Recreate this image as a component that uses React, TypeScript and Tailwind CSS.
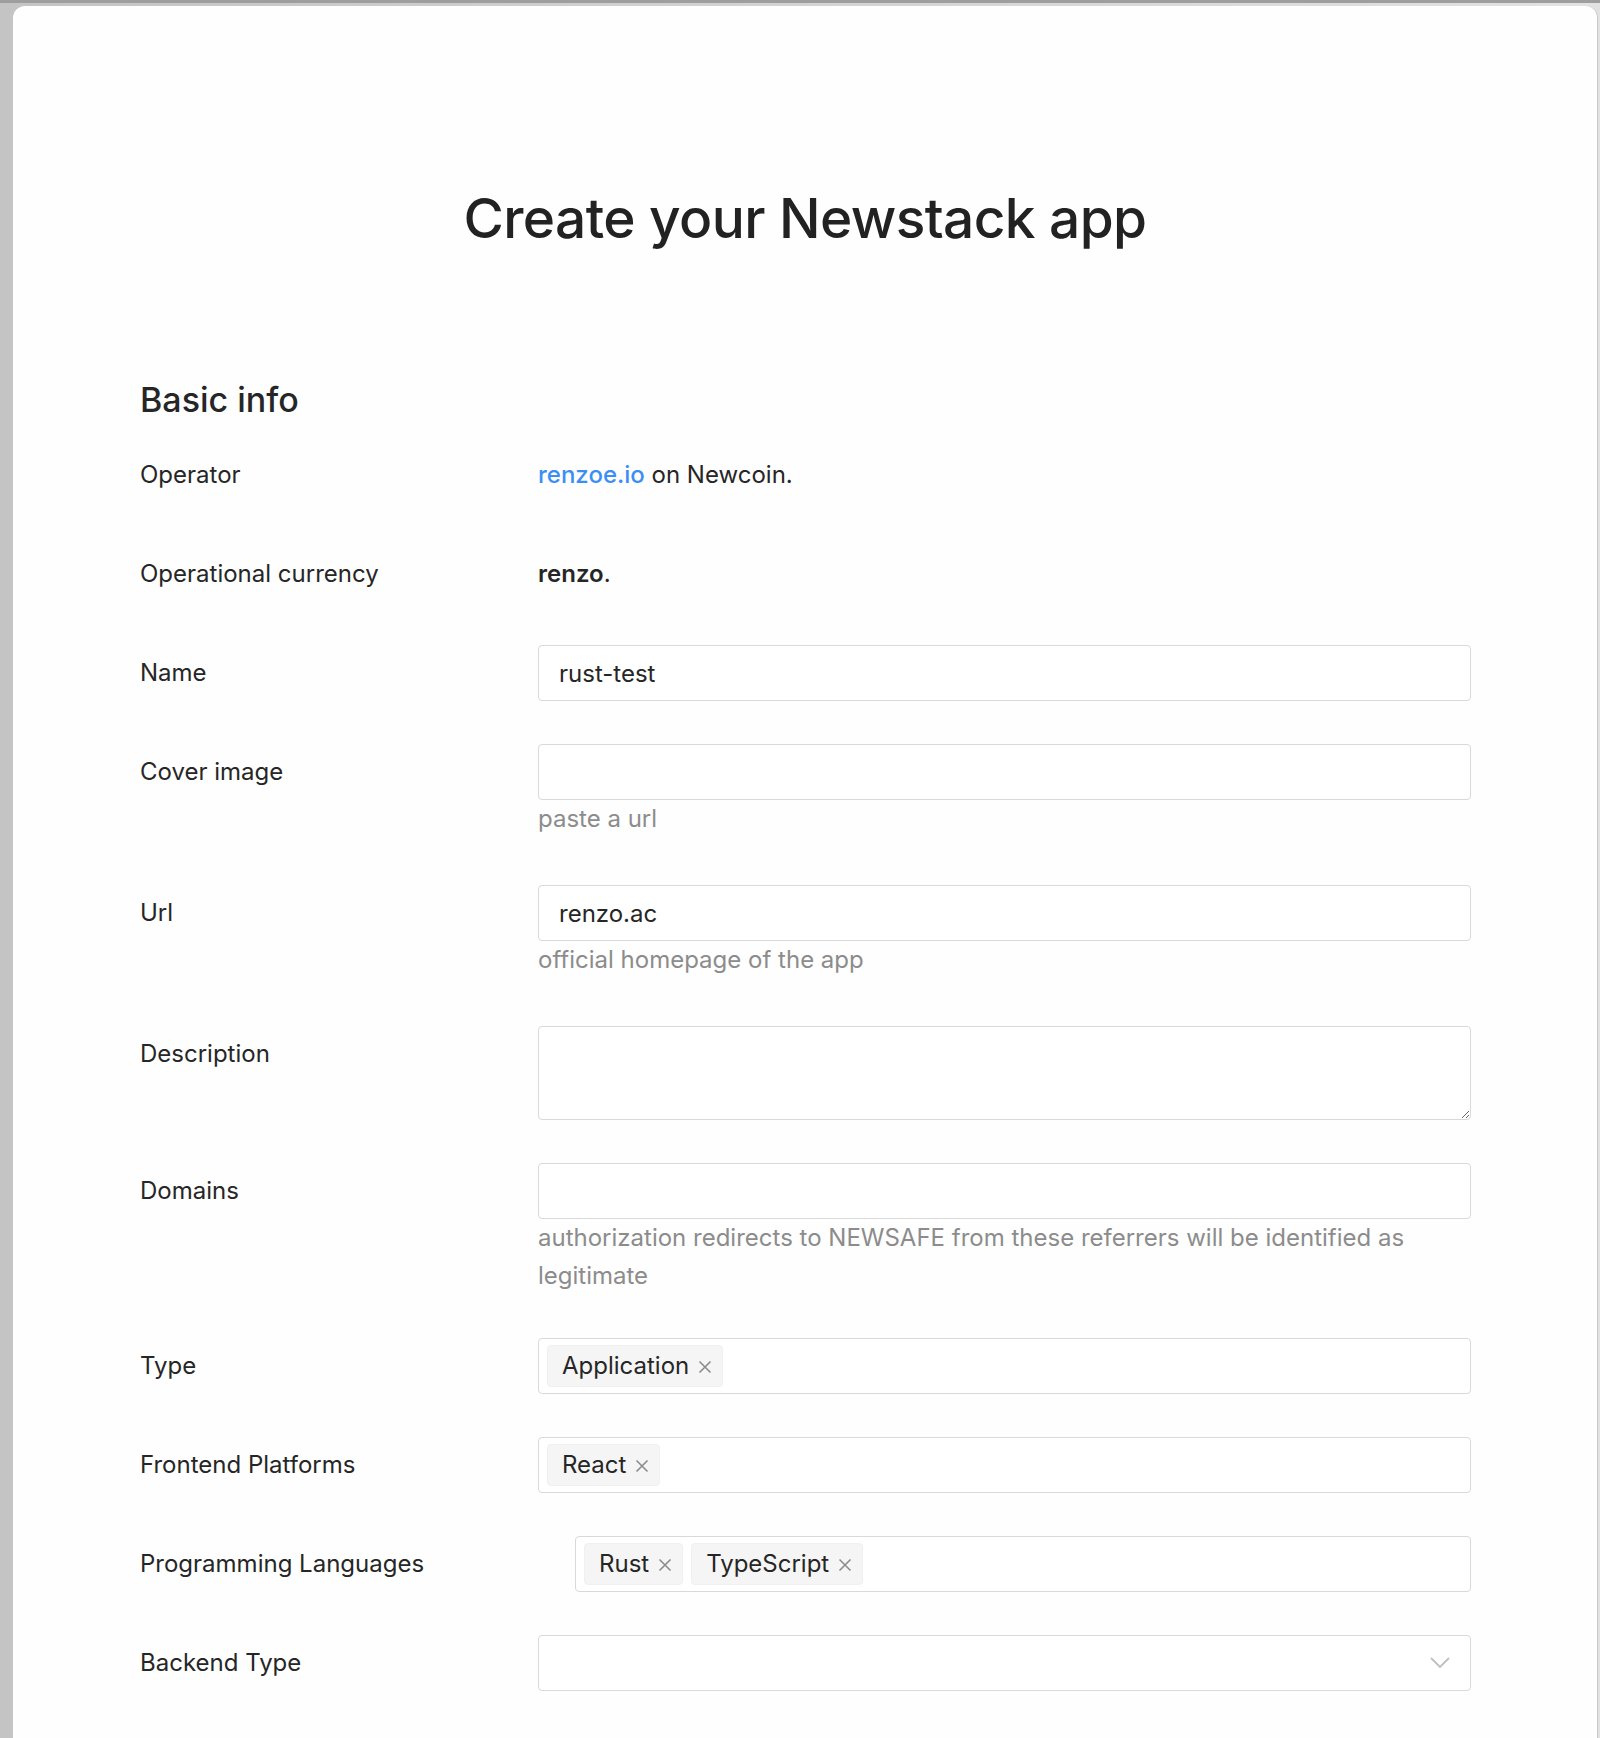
import type { ReactNode } from 'react'

const FONT = { fontFamily: 'Inter, "Noto Sans", "Liberation Sans", sans-serif' }

function Row({
  label,
  children,
}: {
  label: string
  children: ReactNode
}) {
  return (
    <div className="flex mb-[43px]">
      <div className="w-[398px] shrink-0 h-[56px] flex items-center text-[24px] text-[#262626]">
        {label}
      </div>
      <div className="w-[933px] flex flex-col">{children}</div>
    </div>
  )
}

function Extra({ children }: { children: ReactNode }) {
  return <div className="min-h-[42px] text-[24px] leading-[38px] text-[#8c8c8c]">{children}</div>
}

function TextInput({ value = '' }: { value?: string }) {
  return (
    <input
      readOnly
      value={value}
      className="h-[56px] w-full rounded-[4px] border border-[#d9d9d9] bg-white px-[20px] text-[24px] text-[#262626] outline-none"
      style={FONT}
    />
  )
}

function Tag({ label }: { label: string }) {
  return (
    <span className="flex h-[42px] items-center gap-[9px] rounded-[4px] border border-[#f0f0f0] bg-[#f5f5f5] pl-[14px] pr-[10px] text-[24px] text-[#262626]">
      {label}
      <svg width="14" height="14" viewBox="0 0 14 14" className="mt-[2px]">
        <path d="M1.5 1.5 L12.5 12.5 M12.5 1.5 L1.5 12.5" stroke="#8c8c8c" strokeWidth="1.6" />
      </svg>
    </span>
  )
}

function TagSelect({ tags, className = '' }: { tags: string[]; className?: string }) {
  return (
    <div
      className={`h-[56px] rounded-[4px] border border-[#d9d9d9] bg-white pl-[8px] flex items-center gap-[8px] ${className}`}
    >
      {tags.map((t) => (
        <Tag key={t} label={t} />
      ))}
    </div>
  )
}

export default function App() {
  return (
    <div
      className="w-[1600px] h-[1738px] overflow-hidden bg-gradient-to-r from-[#c4c4c4] to-[#e2e2e2] border-t-[3px] border-[#9e9e9e] flex pt-[3px] pl-[13px] pr-[2px]"
      style={FONT}
    >
      <div className="flex-1 bg-[#fefefe] rounded-t-[12px] border-r border-[#c8c8c8] flex flex-col">
        {/* Title */}
        <h1 className="mt-[178px] text-center text-[55px] leading-[68px] font-medium text-[#222] tracking-[-0.6px]">
          Create your Newstack app
        </h1>

        <div className="pl-[127px]">
          <h2 className="mt-[128px] text-[34px] leading-[40px] font-medium text-[#262626]">Basic info</h2>

          <div className="mt-[27px]">
            <Row label="Operator">
              <div className="h-[56px] flex items-center text-[24px] text-[#262626]">
                <span className="font-medium text-[#3b8ef6]">renzoe.io</span>
                <span>&nbsp;on Newcoin.</span>
              </div>
            </Row>

            <Row label="Operational currency">
              <div className="h-[56px] flex items-center text-[24px] text-[#262626]">
                <span className="font-semibold">renzo</span>.
              </div>
            </Row>

            <Row label="Name">
              <TextInput value="rust-test" />
            </Row>

            <Row label="Cover image">
              <TextInput />
              <Extra>paste a url</Extra>
            </Row>

            <Row label="Url">
              <TextInput value="renzo.ac" />
              <Extra>official homepage of the app</Extra>
            </Row>

            <Row label="Description">
              <textarea
                readOnly
                className="h-[94px] w-full rounded-[4px] border border-[#d9d9d9] bg-white px-[20px] py-[8px] text-[24px] outline-none resize-y"
                style={FONT}
              />
            </Row>

            <Row label="Domains">
              <TextInput />
              <Extra>authorization redirects to NEWSAFE from these referrers will be identified as legitimate</Extra>
            </Row>

            <Row label="Type">
              <TagSelect tags={['Application']} />
            </Row>

            <Row label="Frontend Platforms">
              <TagSelect tags={['React']} />
            </Row>

            <Row label="Programming Languages">
              <TagSelect tags={['Rust', 'TypeScript']} className="ml-[37px]" />
            </Row>

            <Row label="Backend Type">
              <div className="h-[56px] rounded-[4px] border border-[#d9d9d9] bg-white flex items-center justify-end pr-[20px]">
                <svg width="20" height="12" viewBox="0 0 20 12">
                  <path d="M1 1 L10 10 L19 1" fill="none" stroke="#bfbfbf" strokeWidth="1.8" />
                </svg>
              </div>
            </Row>
          </div>
        </div>
      </div>
    </div>
  )
}
